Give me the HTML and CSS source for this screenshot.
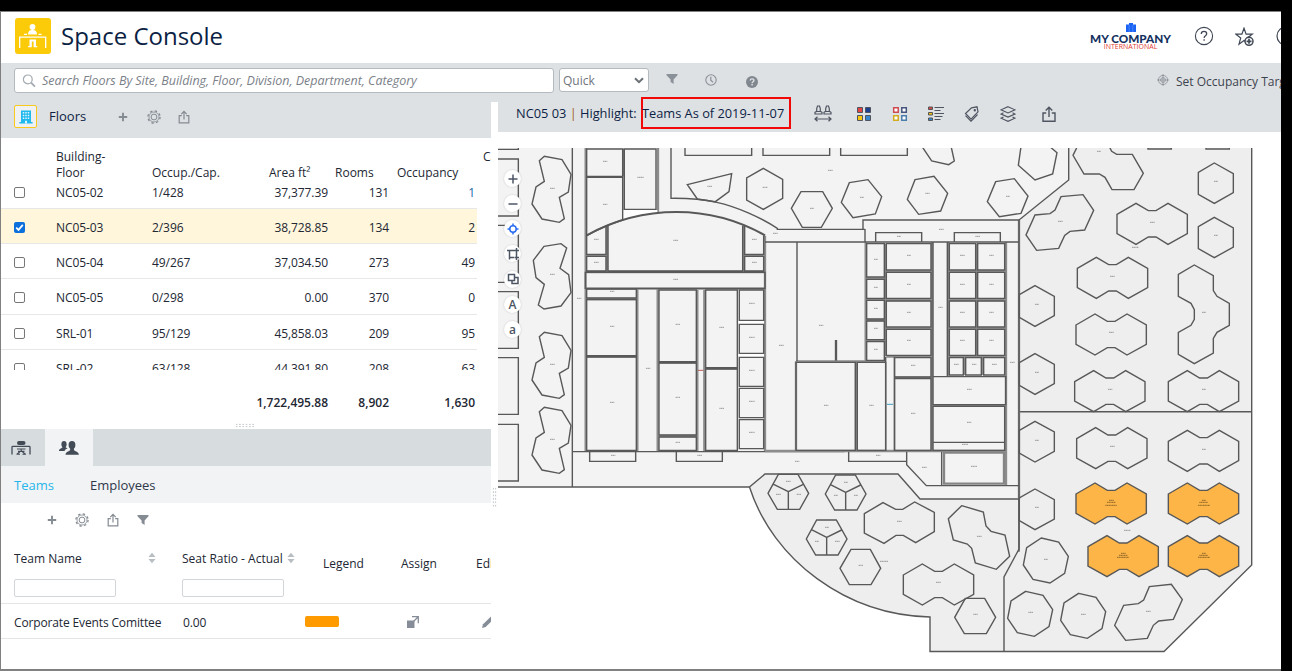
FILE: index.html
```html
<!DOCTYPE html>
<html lang="en">
<head>
<meta charset="utf-8">
<title>Space Console</title>
<link rel="stylesheet" href="styles.css">
</head>
<body>
<svg class="defs" width="0" height="0">
  <defs>
    <symbol id="plus" viewBox="0 0 10 10"><path d="M5 .8v8.400M.8 5h8.400" fill="none" stroke="currentColor" stroke-width="1.900"/></symbol>
    <symbol id="gear" viewBox="0 0 14 14"><circle cx="7" cy="7" r="2.900" fill="none" stroke="currentColor"/><circle cx="7" cy="7" r="5" fill="none" stroke="currentColor" stroke-width=".8"/><circle cx="7" cy="7" r="6.100" fill="none" stroke="currentColor" stroke-width="1.300" stroke-dasharray="2.400 2.390"/></symbol>
    <symbol id="share" viewBox="0 0 12 14"><path d="M3.800 5.600H1.200v7.200h9.600V5.600H8.200M6 9.500V1.600M3.300 4.100 6 1.300l2.700 2.800" fill="none" stroke="currentColor" stroke-width="1.200"/></symbol>
    <symbol id="funnel" viewBox="0 0 12 12"><path d="M.5 1h11v1.200L7.600 6.400V11L4.600 9V6.400L.5 2.200z" fill="currentColor"/></symbol>
    <symbol id="sort" viewBox="0 0 8 12"><path d="M4 .8 7.600 5H.4zM4 11.200 7.600 7H.4z" fill="#b9bec3"/></symbol>
    <path id="bean" d="M148 62 163 49 216 59 243 103 235 156 208 172 223 236 208 247 156 237 126 192 138 141 163 124z"/>
    <path id="pod" d="M0 33 57 0 94 22H117L153 0 211 33V91L153 123 117 101H94L57 123 0 91z"/>
    <path id="trio" d="M25 313H84L116 370 89 418H22L-6 370zM55 365V418M55 365 11 343M55 365 100 343"/>
    <path id="hex" d="M75 437 133 469V527L75 559 28 532V464z"/>
    <path id="hexr" d="M613 69 670 101V158L613 190 565 163V97z"/>
    <path id="oct" d="M94 414 146 426 175 469 164 520 120 549 69 538 40 495 50 443z"/>
  </defs>
</svg>
<div class="app">
  <header class="top">
    <svg class="app-icon" viewBox="0 0 36 36"><rect width="36" height="36" rx="3" fill="#fbca09"/><g fill="#fff"><circle cx="17.500" cy="9" r="2.900"/><path d="M13 16.500c0-3.200 1.500-4.500 4.500-4.500s4.500 1.300 4.500 4.500zM9 15.700h3v1.300H9zM23.500 15.700h3v1.300h-3zM14.500 21.500h6.500V28h1.200v1.300H18.600V23.500h-1.800v5.800h-3.700V28h1.400z"/></g><path d="M4.700 30V19.200H30.700V30" fill="none" stroke="#fff" stroke-width="1.300"/></svg>
    <h1 class="title">Space Console</h1>
    <div class="brand">
      <svg class="brand-mark" viewBox="0 0 10 9"><path d="M0 1.500h3V0h4v1.500h3V9H0z" fill="#1a63f5"/><path d="M3.200 2v7M6.800 2v7" stroke="#7ba6ff" stroke-width=".5"/></svg>
      <span class="brand-name">MY COMPANY</span>
      <span class="brand-sub">INTERNATIONAL</span>
    </div>
    <svg class="top-help" viewBox="0 0 20 20"><circle cx="10" cy="10" r="8.600" fill="none" stroke="#3f4754" stroke-width="1.100"/><path d="M7.300 8c0-1.700 1.100-2.600 2.700-2.600s2.700 1 2.700 2.400c0 1.900-2.600 1.900-2.600 4.100M10.100 13.300v1.500" fill="none" stroke="#3f4754" stroke-width="1.300"/></svg>
    <svg class="top-star" viewBox="0 0 20 20"><path d="M9 1.200 11.100 7.200H17.200L12.300 10.900 14 17 9 13.600 4 17.200 5.700 10.900.9 7.200H6.900z" fill="none" stroke="#3f4754" stroke-width="1.200"/><circle cx="14" cy="14.300" r="4" fill="#fff" stroke="#3f4754" stroke-width="1.500"/><path d="M14 11.800v5M11.500 14.300h5" stroke="#3f4754" stroke-width="1.700"/></svg>
    <svg class="top-user" viewBox="0 0 20 20"><circle cx="10" cy="10" r="9" fill="none" stroke="#3f4754" stroke-width="1.200"/></svg>
  </header>

  <div class="filters">
    <div class="search">
      <svg viewBox="0 0 14 14"><circle cx="5.800" cy="5.400" r="4.400" fill="none" stroke="#a4abb1" stroke-width="1.200"/><path d="m9 8.700 4 4" stroke="#a4abb1" stroke-width="1.800"/></svg>
      <span>Search Floors By Site, Building, Floor, Division, Department, Category</span>
    </div>
    <div class="quick"><span>Quick</span><svg viewBox="0 0 10 7"><path d="m1 1.200 4 4 4-4" fill="none" stroke="#6b7075" stroke-width="2"/></svg></div>
    <svg class="f-funnel"><use href="#funnel"/></svg>
    <svg class="f-clock" viewBox="0 0 12 12"><circle cx="6" cy="6" r="5.200" fill="none" stroke="#8b9199" stroke-width="1.100"/><path d="M5.800 2.700v3.500l2.200 2" fill="none" stroke="#8b9199" stroke-width="1.200"/></svg>
    <svg class="f-help" viewBox="0 0 12 12"><circle cx="6" cy="6" r="6" fill="#81878e"/><path d="M4.200 4.600c0-1.200.8-1.700 1.800-1.700s1.900.6 1.900 1.600c0 1.300-1.800 1.300-1.800 2.800M6.100 8.100v1.400" fill="none" stroke="#dee1e4" stroke-width="1.400"/></svg>
    <div class="target">
      <svg viewBox="0 0 12 12" fill="none" stroke="#888e95" stroke-width=".8"><circle cx="6" cy="6" r="4.600"/><circle cx="6" cy="6" r="2.400"/><path d="M6 0v12M0 6h12"/></svg>
      <span>Set Occupancy Target</span>
    </div>
  </div>

  <div class="main">
    <section class="left">
      <div class="floors-bar">
        <div class="floors-icon"><svg viewBox="0 0 14 14"><path d="M2 .5h10V12h1.600v1.500H.4V12H2z" fill="#1fb9ee"/><path d="M4.500 2v7.500M7 2v7.500M9.500 2v7.500" stroke="#dff4fc" stroke-width="1.500" stroke-dasharray="1.600 1.100"/><path d="M6 13.500v-2.700h2v2.700" fill="#dff4fc"/></svg></div>
        <h2>Floors</h2>
        <svg class="i10"><use href="#plus"/></svg>
        <svg class="i14"><use href="#gear"/></svg>
        <svg class="i12"><use href="#share"/></svg>
      </div>

      <div class="floors">
        <div class="fhead"><span></span><span>Building-<br>Floor</span><span>Occup./Cap.</span><span class="c-area">Area ft²</span><span class="c-rooms">Rooms</span><span class="c-occ">Occupancy</span><span class="cut">Capacity</span></div>
        <div class="frow first"><i class="box"></i><span>NC05-02</span><span>1/428</span><b>37,377.39</b><b>131</b><b class="blue">1</b></div>
        <div class="frow on"><i class="box checked"><svg viewBox="0 0 11 11"><path d="m2.200 5.600 2.300 2.300 4.300-5" fill="none" stroke="#fff" stroke-width="1.700"/></svg></i><span>NC05-03</span><span>2/396</span><b>38,728.85</b><b>134</b><b>2</b></div>
        <div class="frow"><i class="box"></i><span>NC05-04</span><span>49/267</span><b>37,034.50</b><b>273</b><b>49</b></div>
        <div class="frow"><i class="box"></i><span>NC05-05</span><span>0/298</span><b>0.00</b><b>370</b><b>0</b></div>
        <div class="frow"><i class="box"></i><span>SRL-01</span><span>95/129</span><b>45,858.03</b><b>209</b><b>95</b></div>
        <div class="frow"><i class="box"></i><span>SRL-02</span><span>63/128</span><b>44,391.80</b><b>208</b><b>63</b></div>
      </div>
      <div class="totals"><span></span><span></span><span></span><b>1,722,495.88</b><b>8,902</b><b>1,630</b></div>
      <div class="grip-h"><i></i></div>

      <div class="tabs">
        <div class="tab"><svg viewBox="0 0 20 14"><path d="M1 13.500V6.200q0-.8.800-.8H18.200q.8 0 .8.800v7.300" fill="none" stroke="#434b57" stroke-width="1.300"/><rect x="6" y="0" width="8.500" height="4" rx="2" fill="#434b57"/><path d="M6 8h8.500M10.200 8v2.200M7 10.400h6.500M8.800 11l-2.800 2M11.500 11l2.800 2M5.500 13.300H9M11.500 13.300H15" stroke="#434b57" stroke-width="1.100" fill="none"/></svg></div>
        <div class="tab active"><svg viewBox="0 0 20 14" fill="#434b57"><ellipse cx="5" cy="3.200" rx="2.600" ry="3.200"/><path d="M0 9.900C0 7.500 3.300 7.200 3.600 6V5h3v1.200l1.900 1.200C6.500 8.200 6 8.700 5.600 9.900z"/><ellipse cx="13" cy="4" rx="3.400" ry="4"/><path d="M6.500 13.800c0-3.200 4.500-3.300 4.700-5.200V7h3.700v1.600c.2 1.900 5 2 5 5.200z"/></svg></div>
      </div>
      <div class="subtabs"><span class="sel">Teams</span><span>Employees</span></div>

      <div class="team-tools">
        <svg class="i10"><use href="#plus"/></svg>
        <svg class="i14"><use href="#gear"/></svg>
        <svg class="i12"><use href="#share"/></svg>
        <svg class="fun"><use href="#funnel"/></svg>
      </div>
      <div class="teams">
        <div class="thead">
          <div class="tcol name"><p><span>Team Name</span><svg><use href="#sort"/></svg></p><div class="input"></div></div>
          <div class="tcol ratio"><p><span>Seat Ratio - Actual</span><svg><use href="#sort"/></svg></p><div class="input"></div></div>
          <div class="tlabel">Legend</div>
          <div class="tlabel assign">Assign</div>
          <div class="tlabel edit">Edit</div>
        </div>
        <div class="trow">
          <span class="t1">Corporate Events Comittee</span><span class="t2">0.00</span><i class="swatch"></i>
          <svg class="assign-ic" viewBox="0 0 12 12"><path d="M0 4.500h7.500V12H0z" fill="#878d98"/><path d="M5 .7h6.300v6.500M11 1 6 6" fill="none" stroke="#878d98" stroke-width="1.300"/></svg>
          <svg class="edit-ic" viewBox="0 0 12 12"><path d="m0 12 1-3.700L9 .5l2.600 2.600L3.700 11z" fill="#878d98"/></svg>
        </div>
      </div>
    </section>

    <div class="gutter"><i></i></div>

    <section class="right">
      <div class="plan-bar">
        <div class="crumb"><span class="where">NC05 03 <em>|</em> Highlight:</span><span class="mark">Teams As of 2019-11-07</span></div>
        <svg class="pi p1" viewBox="0 0 18 18" fill="none" stroke="#4e5561" stroke-width="1.200"><path d="M1 9V7.300l1.700-1V3.500L3.500 1h2l.8 2.500v2.800l1.700 1V9zM10 9V7.300l1.700-1V3.500l.8-2.500h2l.8 2.500v2.800l1.700 1V9zM2.500 6.500h4M11.500 6.500h4M1 14h16M3.500 11.800 1 14l2.500 2.200M14.500 11.800 17 14l-2.500 2.200"/></svg>
        <svg class="pi p2" viewBox="0 0 16 16" stroke="#4e5561"><path d="M1.500 1.500h5v5h-5z" fill="#e34545"/><path d="M9.500 1.500h5v5h-5z" fill="#1d3f8f"/><path d="M1.500 9.500h5v5h-5z" fill="#f9c70a"/><path d="M9.500 9.500h5v5h-5z" fill="#3484ce"/></svg>
        <svg class="pi p3" viewBox="0 0 16 16" fill="#fff" stroke-width="1.500"><path d="M1.700 1.700h4.500v4.500H1.700z" stroke="#cf4950"/><path d="M9.800 1.700h4.500v4.500H9.800z" stroke="#44557e"/><path d="M1.700 9.800h4.500v4.500H1.700z" stroke="#d3ac1d"/><path d="M9.800 9.800h4.500v4.500H9.800z" stroke="#4a7dac"/></svg>
        <svg class="pi p4" viewBox="0 0 16 16"><path d="M6.500 1.500H16M6.500 4.500h6M6.500 7.500H16M6.500 10.500h8M6.500 13.500h6" stroke="#4e5561" stroke-width="1.200"/><path d="M.5 1h4v2.500h-4z" fill="#d84848" stroke="#555"/><path d="M.5 6.500h4V9h-4z" fill="#eebf14" stroke="#555"/><path d="M.5 12h4v2.500h-4z" fill="#3484ce" stroke="#555"/></svg>
        <svg class="pi p5" viewBox="0 0 16 16" fill="none" stroke="#4e5561" stroke-width="1.200"><path d="M7.500 1.800 13 .8l1 5L7 13.200 1.500 7.500z"/><circle cx="10.800" cy="4.300" r=".6"/><path d="m1.500 9.700 5.500 5.500 6.500-6.700"/></svg>
        <svg class="pi p6" viewBox="0 0 16 16" fill="none" stroke="#4e5561" stroke-width="1.100"><path d="M8 .7 15 3.800 8 6.900 1 3.800zM3.500 6.700 1 8l7 3.100L15 8l-2.500-1.300M3.500 10.900 1 12.200l7 3.100 7-3.100-2.500-1.300"/></svg>
        <svg class="pi p7" viewBox="0 0 14 16"><path d="M4.200 7H1v8.200h12V7H9.800M7 11V1.500M3.700 4.500 7 1.200l3.300 3.300" fill="none" stroke="#4e5561" stroke-width="1.400"/></svg>
      </div>

      <div class="plan">
        <svg class="drawing" viewBox="498 148 783 521" width="783" height="521">
          <path fill="#f3f3f3" d="M498 148H1069V180L1019 220V499H920L898 474H765L749 487H498z"/>
          <path fill="#eee" d="M1069 148H1252V565L1164 651H930V617C846 615 773 560 749 487L765 474H898L920 499H1019V220L1069 180z"/>
          <g class="ln">
            <path d="M1251.700 148V565L1164 651.500H930V617C846 615 773 560 749.500 487L765 474H898L920 499H1019V220L1068.700 180V148M1019 499V549L1004 577V651M1019 411.700H1252"/>
          </g>
          <!-- west wing -->
          <g transform="translate(490 140) scale(.33333)">
            <g class="wall"><path d="M287 24V935M504 24V217M401 27V109M351 257V395M761 257V395M286 396H826M286 446H826M825 287V935M442 447V933M503 447V933M643 450V933M622 450V933M290 477H439M290 649H439M507 667H619M507 888H619M647 685H742M290 346H348M764 346H821"/></g>
            <path fill="#fff" d="M399 210H502V217L399 240zM746 543H822V551H746zM746 642H822V650H746z"/>
            <g class="ln">
              <path d="M-20 28H85V0M-20 57H85V228H-20M-20 256H85V427H-20M-20 455H85V625H-20M-20 653H85V823H-20M-20 853H85V1023H-20"/>
              <use href="#bean"/><use href="#bean" y="528"/><use href="#bean" y="753"/>
              <path d="M162 319 213 311 230 324 210 385 236 404 243 458 213 498 162 507 145 495 163 433 138 413 130 361z"/>
              <path d="M247 24V1041M24 1041H778M247 935H1064M299 935V964H437V935M559 935V964H697V935"/>
              <path d="M290 27H398V109H290zM290 112H398V240Q345 256 290 287zM403 27H498V208H403z"/>
              <path d="M543 24V175Q620 174 680 187C740 200 812 232 862 265V268H1125M585 20V46H785V20M819 20V46H1019V20M1052 20V46H1252V20"/>
              <path d="M592 134 725 101 717 155 676 185 622 177zM820 85 878 118V175L820 208 770 180V114z"/>
              <path class="dome" d="M290 286C380 236 470 216 560 216S740 238 825 286"/>
              <path d="M290 287V343H348V257M290 349H348V393H290zM354 257V393H758V257M764 257V343H821V287M764 349H821V393H764zM286 397H825V445H286z"/>
              <path d="M290 447H439V474H290zM290 479H439V647H290zM290 651H439V931H290zM507 450H619V665H507zM507 669H619V885H507zM507 891H619V931H507zM647 450H742V683H647zM647 687H742V931H647zM748 450H821V541H748zM748 553H821V640H748zM748 652H821V739H748zM748 745H821V833H748zM748 839H821V926H748z"/>
            </g>
            <path class="lb" d="M180 145h14M180 403h14M180 673h14M180 898h14M339 64h13M339 193h13M442 112h20M312 298h14M312 367h14M550 301h14M550 418h14M786 298h14M786 367h14M652 139h14M818 142h14M849 280h14M261 475h13M360 454h13M360 559h13M360 787h13M468 685h13M557 553h13M557 772h13M557 907h13M688 562h14M688 805h14M777 490h17M777 592h17M777 691h17M777 784h17M777 877h17M363 946h13M622 946h14"/>
            <path d="M624 691h16" stroke="#b3453f" stroke-width="2.500"/>
          </g>
          <!-- core -->
          <g transform="translate(770 140) scale(.33333)">
            <g class="wall"><path d="M287 306V663M346 311V648M486 306V933M535 306V707M620 311V648M708 306V1037M747 240V1076M290 415H343M290 478H343M290 540H343M290 602H343M349 394H483M349 480H483M349 565H483M349 650H483M538 394H704M538 480H704M538 565H704M538 650H704M583 653V705M637 653V705M78 664H347M258 667V933M374 713H483M489 797H704M78 664V933M-15 933H704"/></g>
            <g class="ln">
              <path d="M-15 306H747M279 267V240H747V1235M285 267V306M317 306V278H455V306M553 306V278H691V306M81 306V663M78 667H256V931H78zM262 667H347V931H262z"/>
              <path d="M290 311H343V411H290zM290 418H343V475H290zM290 481H343V537H290zM290 543H343V599H290zM290 605H343V661H290z"/>
              <path d="M349 311H483V390H349zM349 397H483V475H349zM349 483H483V561H349zM349 568H483V646H349zM538 311H617V390H538zM538 397H617V475H538zM538 483H617V561H538zM538 568H617V646H538zM623 311H704V390H623zM623 397H704V475H623zM623 483H704V561H623zM623 568H704V646H623z"/>
              <path d="M538 653H580V705H538zM587 653H634V705H587zM641 653H704V705H641zM374 653H483V711H374zM374 716H483V931H374zM489 710H707V794H489zM489 799H704V907H489zM489 907H704V931H489zM489 306V710M532 306V710M347 650V933M373 650V933"/>
              <path d="M236 935V964H410M410 935V974L469 1037H747M515 935V1037"/>
              <path class="door" d="M198 600V662"/>
              <path class="thick" d="M522 938H702V1031H522z"/>
              <path d="M64 205 93 155H158L187 205 154 262H97zM238 128 294 119 335 170 316 222 249 233 214 187zM435 119 492 109 533 160 512 213 446 223 412 178zM677 125 733 116 774 168 753 220 688 230 652 185zM455 18 485 63 536 74 553 63 543 18"/>
            </g>
            <path class="lb" d="M174 91h14M120 205h12M270 172h12M466 160h13M708 169h12M507 268h15M381 289h12M616 289h14M312 358h12M312 442h12M312 505h12M312 565h12M312 628h12M411 346h12M411 433h12M411 517h12M411 601h12M570 346h15M570 433h15M570 517h15M570 601h15M658 346h13M658 433h13M658 517h13M658 601h13M505 502h13M147 556h13M27 616h14M720 667h15M552 673h15M606 673h13M666 673h14M423 676h13M162 796h13M298 796h13M423 820h13M591 748h15M591 847h13M576 913h18M75 964h13M318 946h13M456 982h15M603 979h18"/>
            <path d="M351 793h18" stroke="#3c9fc4" stroke-width="3"/>
          </g>
          <!-- south garden -->
          <g transform="translate(770 370) scale(.33333)">
            <g class="ln">
              <use href="#trio"/><use href="#trio" x="172" y="2"/><use href="#trio" x="115" y="137"/>
              <path d="M243 538H301L332 595 303 644H238L210 595zM586 685H644L677 742 649 791H583L554 742z"/>
              <path d="M283 431 339 398 377 418H398L434 396 493 427V485L437 518 400 496H378L342 520 283 489z"/>
              <use href="#pod" x="400" y="582"/>
              <path d="M575 407 640 426 648 468 663 484 705 495 719 559 679 598 616 579 605 535 592 522 550 510 535 446z"/>
            </g>
            <path class="lb" d="M48 334h14M18 373h14M80 373h13M222 337h12M192 376h12M252 376h12M165 472h12M135 514h12M195 514h14M266 586h13M330 574h24M381 454h14M621 499h14M498 637h14M610 733h13"/>
          </g>
          <!-- east lawn, upper -->
          <g transform="translate(1010 140) scale(.33333)">
            <g class="ln">
              <path d="M33 20 25 76 75 120 128 102 141 38 122 22M200 24 189 46 222 102H268L285 112 306 149H372L400 100 367 43H320L305 34 299 22M414 20V27H484V20M588 20V27H658V20"/>
              <path d="M80 331 48 285 75 225 120 221 135 210 153 170 219 164 251 211 224 270 180 274 164 286 146 325z"/>
              <path d="M553 375 610 407V452L621 469 658 490V556L621 577 610 595V639L553 671 505 643V577L543 556 553 538V509L543 490 505 469V403z"/>
              <use href="#pod" x="321" y="190"/><use href="#pod" x="202" y="352"/><use href="#pod" x="198" y="522"/><use href="#pod" x="194" y="692"/><use href="#pod" x="475" y="692"/>
              <use href="#hex"/><use href="#hex" y="204"/><use href="#hex" y="407"/><use href="#hex" y="610"/>
              <use href="#hexr"/><use href="#hexr" y="163"/>
            </g>
            <path class="lb" d="M261 34h12M144 244h14M420 247h14M366 322h20M612 124h12M612 286h12M576 517h12M300 409h14M297 577h14M294 748h13M576 748h12M75 493h12M75 697h12M75 901h12M75 1102h12"/>
          </g>
          <!-- east lawn, lower -->
          <g transform="translate(1010 400) scale(.33333)">
            <g class="ln">
              <use href="#pod" x="200" y="83"/><use href="#pod" x="475" y="91"/>
              <g fill="#fdb548"><use href="#pod" x="198" y="249"/><use href="#pod" x="475" y="249"/><use href="#pod" x="234" y="407"/><use href="#pod" x="475" y="407"/></g>
              <use href="#oct"/><use href="#oct" x="-47" y="160"/><use href="#oct" x="112" y="166"/>
              <path d="M347 721 314 676 341 616 385 611 401 600 418 560 484 553 517 599 490 658 446 663 430 676 412 715z"/>
            </g>
            <path class="lb" d="M300 139h14M576 148h12M102 478h12M55 637h14M213 643h14M408 634h14M342 391h20"/>
            <path class="lb seat" d="M297 301h14M291 307h26M286 316h35M576 301h12M568 307h26M564 316h36M333 460h14M327 466h26M321 472h36M576 460h12M568 466h26M564 472h36"/>
          </g>
        </svg>
        <div class="zoomers">
          <i><svg viewBox="0 0 12 12"><path d="M6 1.500v9M1.500 6h9"/></svg></i>
          <i><svg viewBox="0 0 12 12"><path d="M1.500 6h9"/></svg></i>
          <i class="loc"><svg viewBox="0 0 12 12"><circle cx="6" cy="6" r="3.200"/><path d="M6 .5V3M6 9v2.500M.5 6H3M9 6h2.500"/></svg></i>
          <i><svg viewBox="0 0 12 12"><path d="M2.500 4v5.500h5M0 2.500h4M2.500 4.500V2.500H8M9.500 3v5M8 9.500h4M9.500 8v4M9.500 0v4M8 2.500h4M2.500 9v2.500"/></svg></i>
          <i><svg viewBox="0 0 12 12"><path d="M1.500 1.500h6v6h-6zM8 4.500h3v6H5V8"/></svg></i>
          <i>A</i>
          <i>a</i>
        </div>
      </div>
    </section>
  </div>
</div>
</body>
</html>
```
FILE: styles.css
```css
* { box-sizing: border-box; }
body { margin: 0; padding-top: 11px; height: 671px; background: #000; overflow: hidden; font-family: "Open Sans", sans-serif; font-size: 12px; color: #222733; }
.defs { display: block; position: absolute; }
.app { width: 1281px; height: 660px; border: solid #808080; border-width: 1px 0 2px 1px; background: #fff; overflow: hidden; display: flex; flex-direction: column; }
h1, h2, p { margin: 0; font-weight: 400; }
i { font-style: normal; }
svg { flex: none; }

.top { height: 51px; flex: none; display: flex; align-items: center; padding-left: 14px; overflow: hidden; }
.app-icon { width: 36px; height: 36px; margin-top: -3px; }
.title { flex: none; margin: -3px 0 0 10px; width: 1020px; font-size: 24px; line-height: 32px; color: #0c1f44; }
.brand { width: 81px; margin: -3px 0 0 9px; flex: none; display: flex; flex-direction: column; align-items: center; }
.brand-mark { width: 10px; height: 9px; }
.brand-name { font: 900 11.700px/12px Lato, sans-serif; color: #14315f; white-space: nowrap; }
.brand-sub { font: 400 7px/6px "Open Sans", sans-serif; color: #e23b30; white-space: nowrap; }
.top-help { width: 20px; height: 20px; margin: -3px 0 0 23px; }
.top-star { width: 20px; height: 20px; margin: -2px 0 0 21px; }
.top-user { width: 20px; height: 20px; margin: -3px 0 0 21px; }

.filters { height: 39px; flex: none; background: #dee1e4; display: flex; align-items: flex-start; padding: 5px 0 0 13px; overflow: hidden; }
.search { width: 540px; height: 25px; flex: none; border: 1px solid #b3bac0; border-radius: 3px; background: #fff; display: flex; align-items: center; padding-left: 7px; font-style: italic; font-size: 12.500px; letter-spacing: -.035px; color: #7b8188; white-space: nowrap; }
.search svg { width: 14px; height: 14px; margin-right: 6px; }
.quick { width: 90px; height: 24px; margin-left: 5px; flex: none; border: 1px solid #b3bac0; border-radius: 3px; background: #fff; display: flex; align-items: center; justify-content: space-between; padding: 0 4px 0 3px; color: #70757c; font-size: 12px; }
.quick svg { width: 10px; height: 7px; }
.f-funnel { width: 12px; height: 12px; margin: 5px 0 0 17px; color: #8b9199; }
.f-clock { width: 12px; height: 12px; margin: 6px 0 0 27px; }
.f-help { width: 12px; height: 12px; margin: 8px 0 0 29px; }
.target { margin: 5px 0 0 399px; flex: none; display: flex; gap: 7px; white-space: nowrap; color: #3d434e; line-height: 17px; }
.target svg { width: 12px; height: 12px; margin-top: 1px; }

.main { flex: 1; display: flex; min-height: 0; }
.left { width: 490px; flex: none; overflow: hidden; display: flex; flex-direction: column; }
.floors-bar { height: 36px; flex: none; background: #dee1e4; display: flex; align-items: center; padding: 0 0 7px 13px; color: #858b93; }
.floors-icon { width: 23px; height: 23px; border: 1px solid #f9ca1b; border-radius: 2px; background: #eef0f2; display: flex; align-items: center; justify-content: center; }
.floors-icon svg { width: 14px; height: 14px; }
.floors-bar h2 { width: 69px; margin-left: 12px; margin-top: -1px; font-size: 13px; color: #0c1f44; }
.i10 { width: 10px; height: 10px; }
.i14 { width: 14px; height: 14px; margin-left: 19px; }
.i12 { width: 12px; height: 14px; margin-left: 17px; }

.floors { height: 232px; flex: none; overflow: hidden; }
.fhead, .frow, .totals { display: grid; grid-template-columns: 42px 96px 95px 81px 61px 86px 60px; padding-left: 13px; align-items: center; }
.fhead { height: 46px; align-items: end; padding-bottom: 3px; line-height: 16px; width: 560px; }
.fhead .c-area { padding-left: 22px; }
.fhead .c-rooms { padding-left: 7px; white-space: nowrap; }
.fhead .c-occ { padding-left: 8px; }
.fhead .cut { align-self: start; padding: 11px 0 0 8px; }
.frow { height: 35px; width: 476px; padding-top: 2px; border-bottom: 1px solid #e6e7e9; grid-template-columns: 42px 96px 95px 81px 61px 86px; letter-spacing: -.08px; }
.frow:nth-child(5) { height: 36px; }
.frow.first { height: 25px; padding-top: 0; padding-bottom: 8px; }
.frow.on { background: #fff6dc; }
.frow b { font-weight: 400; text-align: right; }
.frow .blue { color: #1c6aa8; }
.box { width: 11px; height: 11px; border: 1px solid #777; border-radius: 2px; background: #fff; }
.box.checked { border: 0; background: #0b70dc; }
.box svg { display: block; width: 11px; height: 11px; }
.totals { height: 51px; flex: none; padding-top: 13px; line-height: 17px; }
.totals b { font-weight: 600; text-align: right; }
.grip-h { height: 8px; flex: none; padding-left: 234px; }
.grip-h i { display: block; width: 20px; height: 5px; margin-top: 2px; background: radial-gradient(#b4b9be 40%, transparent 50%) 0 0 / 3.300px 2.500px; }

.tabs { height: 37px; flex: none; display: flex; background: #d7dcdf; }
.tab { width: 44px; display: flex; align-items: center; justify-content: center; padding-right: 4px; }
.tab svg { width: 20px; height: 14px; }
.tab.active { width: 48px; background: #f1f3f5; padding: 0; }
.subtabs { height: 37px; flex: none; background: #f1f3f5; display: flex; align-items: center; gap: 36px; padding: 0 0 0 13px; font-size: 13px; color: #30384a; }
.subtabs .sel { color: #27b6ea; }

.team-tools { height: 34px; flex: none; display: flex; align-items: center; padding-left: 46px; color: #858b93; }
.team-tools .fun { width: 12px; height: 12px; margin-left: 18px; }
.team-tools .i12 { margin-left: 18px; }
.team-tools .i10 { margin-right: -1px; }
.teams { width: 540px; flex: none; }
.thead { height: 67px; border-bottom: 1px solid #e3e5e6; display: flex; padding-left: 13px; }
.tcol, .tlabel { flex: none; }
.tcol.name { width: 168px; }
.tcol.ratio { width: 141px; }
.tcol p { height: 42px; display: flex; align-items: center; gap: 4px; white-space: nowrap; }
.tcol.name span { width: 130px; }
.tcol svg { width: 8px; height: 12px; }
.input { width: 102px; height: 18px; border: 1px solid #d2d6da; border-radius: 2px; background: #fff; }
.tlabel { width: 78px; padding-top: 18px; line-height: 17px; }
.tlabel.assign { width: 75px; }
.trow { height: 35px; border-bottom: 1px solid #e3e5e6; display: flex; align-items: center; padding: 2px 0 0 13px; white-space: nowrap; }
.trow > * { flex: none; }
.t1 { width: 169px; letter-spacing: -.14px; }
.t2 { width: 122px; letter-spacing: -.14px; }
.swatch { width: 34px; height: 11px; margin-top: -1px; border-radius: 2px; background: #ff9b00; }
.assign-ic { width: 12px; height: 12px; margin-left: 68px; }
.edit-ic { width: 12px; height: 12px; margin-left: 63px; }

.gutter { width: 7px; flex: none; padding-top: 385px; }
.gutter i { display: block; width: 5px; height: 20px; margin-left: 1px; background: radial-gradient(#b4b9be 40%, transparent 50%) 0 0 / 2.500px 3.400px; }

.right { width: 783px; flex: none; display: flex; flex-direction: column; }
.plan-bar { height: 30px; flex: none; background: #dee1e4; display: flex; align-items: center; padding-left: 18px; }
.crumb { width: 298px; flex: none; margin-top: -8px; font-size: 12.800px; white-space: nowrap; color: #0c1f44; display: flex; align-items: center; }
.where { width: 125px; }
.crumb em { color: #a05a28; font-style: normal; }
.mark { width: 150px; height: 32px; margin: -3px 0; border: 2px solid #f30808; line-height: 28px; text-indent: -1px; }
.pi { width: 16px; height: 16px; margin-top: -6px; }
.p1 { width: 18px; height: 18px; }
.p2 { margin-left: 24px; }
.p3, .p4, .p5, .p6 { margin-left: 20px; }
.p7 { width: 14px; margin-left: 26px; }

.plan { position: relative; flex: 1; padding-top: 16px; }
.drawing { display: block; overflow: hidden; }
.ln, .wall, .lb { fill: none; }
.ln { stroke: #585858; stroke-width: 1.400px; }
g[transform] > .ln { stroke-width: 4.200px; }
.wall { stroke: #8c8c8c; stroke-width: 7px; }
.ln .dome { stroke-width: 6.500px; }
.ln .door { stroke-width: 7px; }
.ln .thick { stroke: #858585; stroke-width: 7px; }
.lb { stroke: #777; stroke-width: 2.600px; stroke-dasharray: 4 1; opacity: .85; }
.lb.seat { stroke: #66491d; }
.zoomers { position: absolute; left: 6px; top: 38px; display: flex; flex-direction: column; gap: 8px; }
.zoomers i { width: 17px; height: 17px; margin-bottom: .17px; border-radius: 50%; background: #fff; box-shadow: 0 0 2px rgba(0,0,0,.2); display: flex; align-items: center; justify-content: center; font-size: 12px; line-height: 17px; font-weight: 600; color: #4c5564; }
.zoomers svg { width: 12px; height: 12px; fill: none; stroke: #4c5564; stroke-width: 1.500; }
.zoomers .loc svg { stroke: #2a6df4; }
```
